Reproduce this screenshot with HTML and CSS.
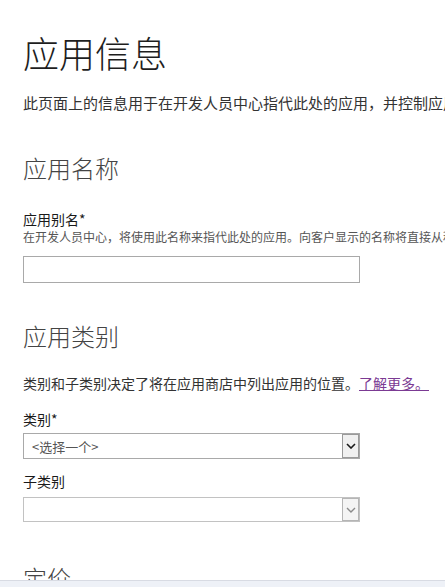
FILE: index.html
```html
<!DOCTYPE html>
<html lang="zh">
<head>
    <meta charset="UTF-8">
    <meta name="viewport" content="width=device-width, initial-scale=1.0">
    <title>应用信息</title>
    <link rel="stylesheet" href="styles.css">
</head>
<body>
    <div class="page">
        <h1>应用信息</h1>
        <p class="intro">此页面上的信息用于在开发人员中心指代此处的应用，并控制应用在应用商店中的显示方式。</p>

        <h2 class="section-title">应用名称</h2>
        <label class="field-label" for="alias">应用别名*</label>
        <div class="field-hint">在开发人员中心，将使用此名称来指代此处的应用。向客户显示的名称将直接从程序包中获取。</div>
        <input class="text-input" type="text" id="alias">

        <h2 class="section-title section-category">应用类别</h2>
        <p class="intro intro-category">类别和子类别决定了将在应用商店中列出应用的位置。<a href="#" class="learn-more">了解更多。</a></p>

        <label class="field-label label-category" for="category">类别*</label>
        <div class="select-box select-category">
            <select id="category">
                <option>&lt;选择一个&gt;</option>
            </select>
            <span class="select-arrow">
                <svg width="10" height="6" viewBox="0 0 10 6"><path d="M1 1 L5 5 L9 1" fill="none" stroke="#1a1a1a" stroke-width="1.6"/></svg>
            </span>
        </div>

        <label class="field-label label-sub" for="subcategory">子类别</label>
        <div class="select-box select-sub">
            <select id="subcategory" disabled>
                <option></option>
            </select>
            <span class="select-arrow arrow-disabled">
                <svg width="10" height="6" viewBox="0 0 10 6"><path d="M1 1 L5 5 L9 1" fill="none" stroke="#8a8a8a" stroke-width="1.4"/></svg>
            </span>
        </div>

        <h2 class="section-title section-price">定价</h2>
    </div>
    <div class="bottom-bar"></div>
</body>
</html>
```

FILE: styles.css
```css
html, body {
    margin: 0;
    padding: 0;
    overflow: hidden;
    background-color: #ffffff;
}
body {
    font-family: "Noto Sans CJK SC", "Noto Sans", sans-serif;
    color: #222;
    height: 587px;
}
.page {
    padding: 30px 0 0 23px;
    width: 900px;
    white-space: nowrap;
}
h1 {
    margin: 0;
    font-size: 36px;
    line-height: 44px;
    font-weight: 300;
    color: #1e1e1e;
}
.intro {
    margin: 19px 0 0 0;
    font-size: 15px;
    line-height: 20px;
    color: #333;
}
.section-title {
    margin: 39px 0 0 0;
    font-size: 24px;
    line-height: 32px;
    font-weight: 300;
    color: #444;
}
.field-label {
    display: block;
    margin-top: 26px;
    font-size: 14px;
    line-height: 18px;
    color: #1a1a1a;
}
.field-hint {
    font-size: 12px;
    line-height: 18px;
    color: #555;
}
.text-input {
    display: block;
    margin-top: 10px;
    width: 337px;
    height: 27px;
    box-sizing: border-box;
    border: 1px solid #a9a9a9;
    padding: 2px 6px;
    font-size: 12px;
    font-family: inherit;
}
.section-category {
    margin-top: 37px;
}
.intro-category {
    margin-top: 21px;
    font-size: 14px;
}
.learn-more {
    color: #7b3a93;
    text-decoration: underline;
}
.label-category {
    margin-top: 17px;
}
.select-box {
    position: relative;
    width: 337px;
    margin-top: 5px;
}
.select-box select {
    display: block;
    width: 100%;
    height: 26px;
    box-sizing: border-box;
    border: 1px solid #a9a9a9;
    border-radius: 0;
    background-color: #fff;
    padding: 0 8px;
    font-family: inherit;
    font-size: 13px;
    color: #555;
    appearance: none;
    -webkit-appearance: none;
}
.select-arrow {
    position: absolute;
    top: 1px;
    right: 1px;
    bottom: 1px;
    width: 17px;
    display: flex;
    align-items: center;
    justify-content: center;
    background-color: #f0f0f0;
    border: 1px solid #9a9a9a;
    box-sizing: border-box;
}
.label-sub {
    margin-top: 13px;
}
.select-sub {
    margin-top: 7px;
}
.select-sub select {
    height: 25px;
}
.arrow-disabled {
    background-color: #f4f4f4;
    border-color: #b5b5b5;
}
.section-price {
    margin-top: 40px;
}
.bottom-bar {
    position: fixed;
    left: 0;
    right: 0;
    bottom: 0;
    height: 6px;
    background-color: #eef1f7;
    border-top: 1px solid #d8dbe3;
}
```
